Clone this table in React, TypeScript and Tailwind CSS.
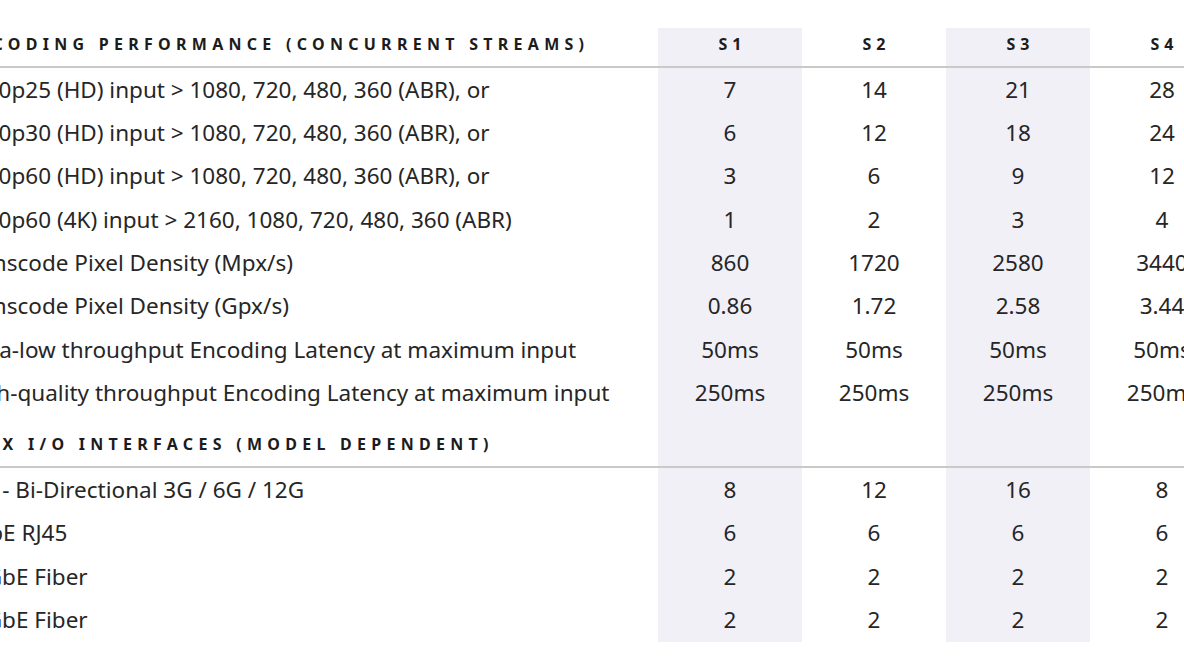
const cols = 'grid grid-cols-[698px_144px_144px_144px_144px]';

type Row = { label: string; values: string[] };

const encoding: Row[] = [
  { label: '1080p25 (HD) input > 1080, 720, 480, 360 (ABR), or', values: ['7', '14', '21', '28'] },
  { label: '1080p30 (HD) input > 1080, 720, 480, 360 (ABR), or', values: ['6', '12', '18', '24'] },
  { label: '1080p60 (HD) input > 1080, 720, 480, 360 (ABR), or', values: ['3', '6', '9', '12'] },
  { label: '2160p60 (4K) input > 2160, 1080, 720, 480, 360 (ABR)', values: ['1', '2', '3', '4'] },
  { label: 'Transcode Pixel Density (Mpx/s)', values: ['860', '1720', '2580', '3440'] },
  { label: 'Transcode Pixel Density (Gpx/s)', values: ['0.86', '1.72', '2.58', '3.44'] },
  { label: 'Ultra-low throughput Encoding Latency at maximum input', values: ['50ms', '50ms', '50ms', '50ms'] },
  { label: 'High-quality throughput Encoding Latency at maximum input', values: ['250ms', '250ms', '250ms', '250ms'] },
];

const io: Row[] = [
  { label: 'SDI - Bi-Directional 3G / 6G / 12G', values: ['8', '12', '16', '8'] },
  { label: '1GbE RJ45', values: ['6', '6', '6', '6'] },
  { label: '10GbE Fiber', values: ['2', '2', '2', '2'] },
  { label: '25GbE Fiber', values: ['2', '2', '2', '2'] },
];

function shade(i: number) {
  return i === 0 || i === 2 ? 'bg-[#f2f0f7]' : '';
}

function SectionHeader({ title, heads, tall }: { title: string; heads: string[]; tall?: boolean }) {
  return (
    <div className={`${cols} ${tall ? 'h-[52px]' : 'h-[38px]'}`}>
      <div className="flex items-end pb-[13px] text-[16px] leading-[18px] font-bold tracking-[0.33em] text-[#1c1c1c] whitespace-nowrap">
        {title}
      </div>
      {[0, 1, 2, 3].map((i) => (
        <div
          key={i}
          className={`flex items-end justify-center pb-[13px] text-[16px] leading-[18px] font-bold tracking-[0.3em] text-[#1c1c1c] ${shade(i)}`}
        >
          {heads[i] ? <span className="ml-[0.3em]">{heads[i]}</span> : null}
        </div>
      ))}
    </div>
  );
}

function DataRow({ row }: { row: Row }) {
  return (
    <div className={`${cols} h-[43.3px] text-[22.5px] text-[#262626]`}>
      <div className="flex items-center whitespace-nowrap">{row.label}</div>
      {row.values.map((v, i) => (
        <div key={i} className={`flex items-center justify-center ${shade(i)}`}>
          {v}
        </div>
      ))}
    </div>
  );
}

export default function App() {
  return (
    <div
      className="w-[1184px] h-[662px] overflow-hidden bg-white"
      style={{ fontFamily: '"Noto Sans", "Open Sans", sans-serif' }}
    >
      <div className="ml-[-40px] w-[1274px] pt-[28px]">
        <SectionHeader title="ENCODING PERFORMANCE (CONCURRENT STREAMS)" heads={['S1', 'S2', 'S3', 'S4']} />
        <div className="h-[2px] bg-[#c9c9c9]" />
        {encoding.map((r) => (
          <DataRow key={r.label} row={r} />
        ))}
        <SectionHeader title="FLEX I/O INTERFACES (MODEL DEPENDENT)" heads={[]} tall />
        <div className="h-[2px] bg-[#c9c9c9]" />
        {io.map((r) => (
          <DataRow key={r.label} row={r} />
        ))}
      </div>
    </div>
  );
}
